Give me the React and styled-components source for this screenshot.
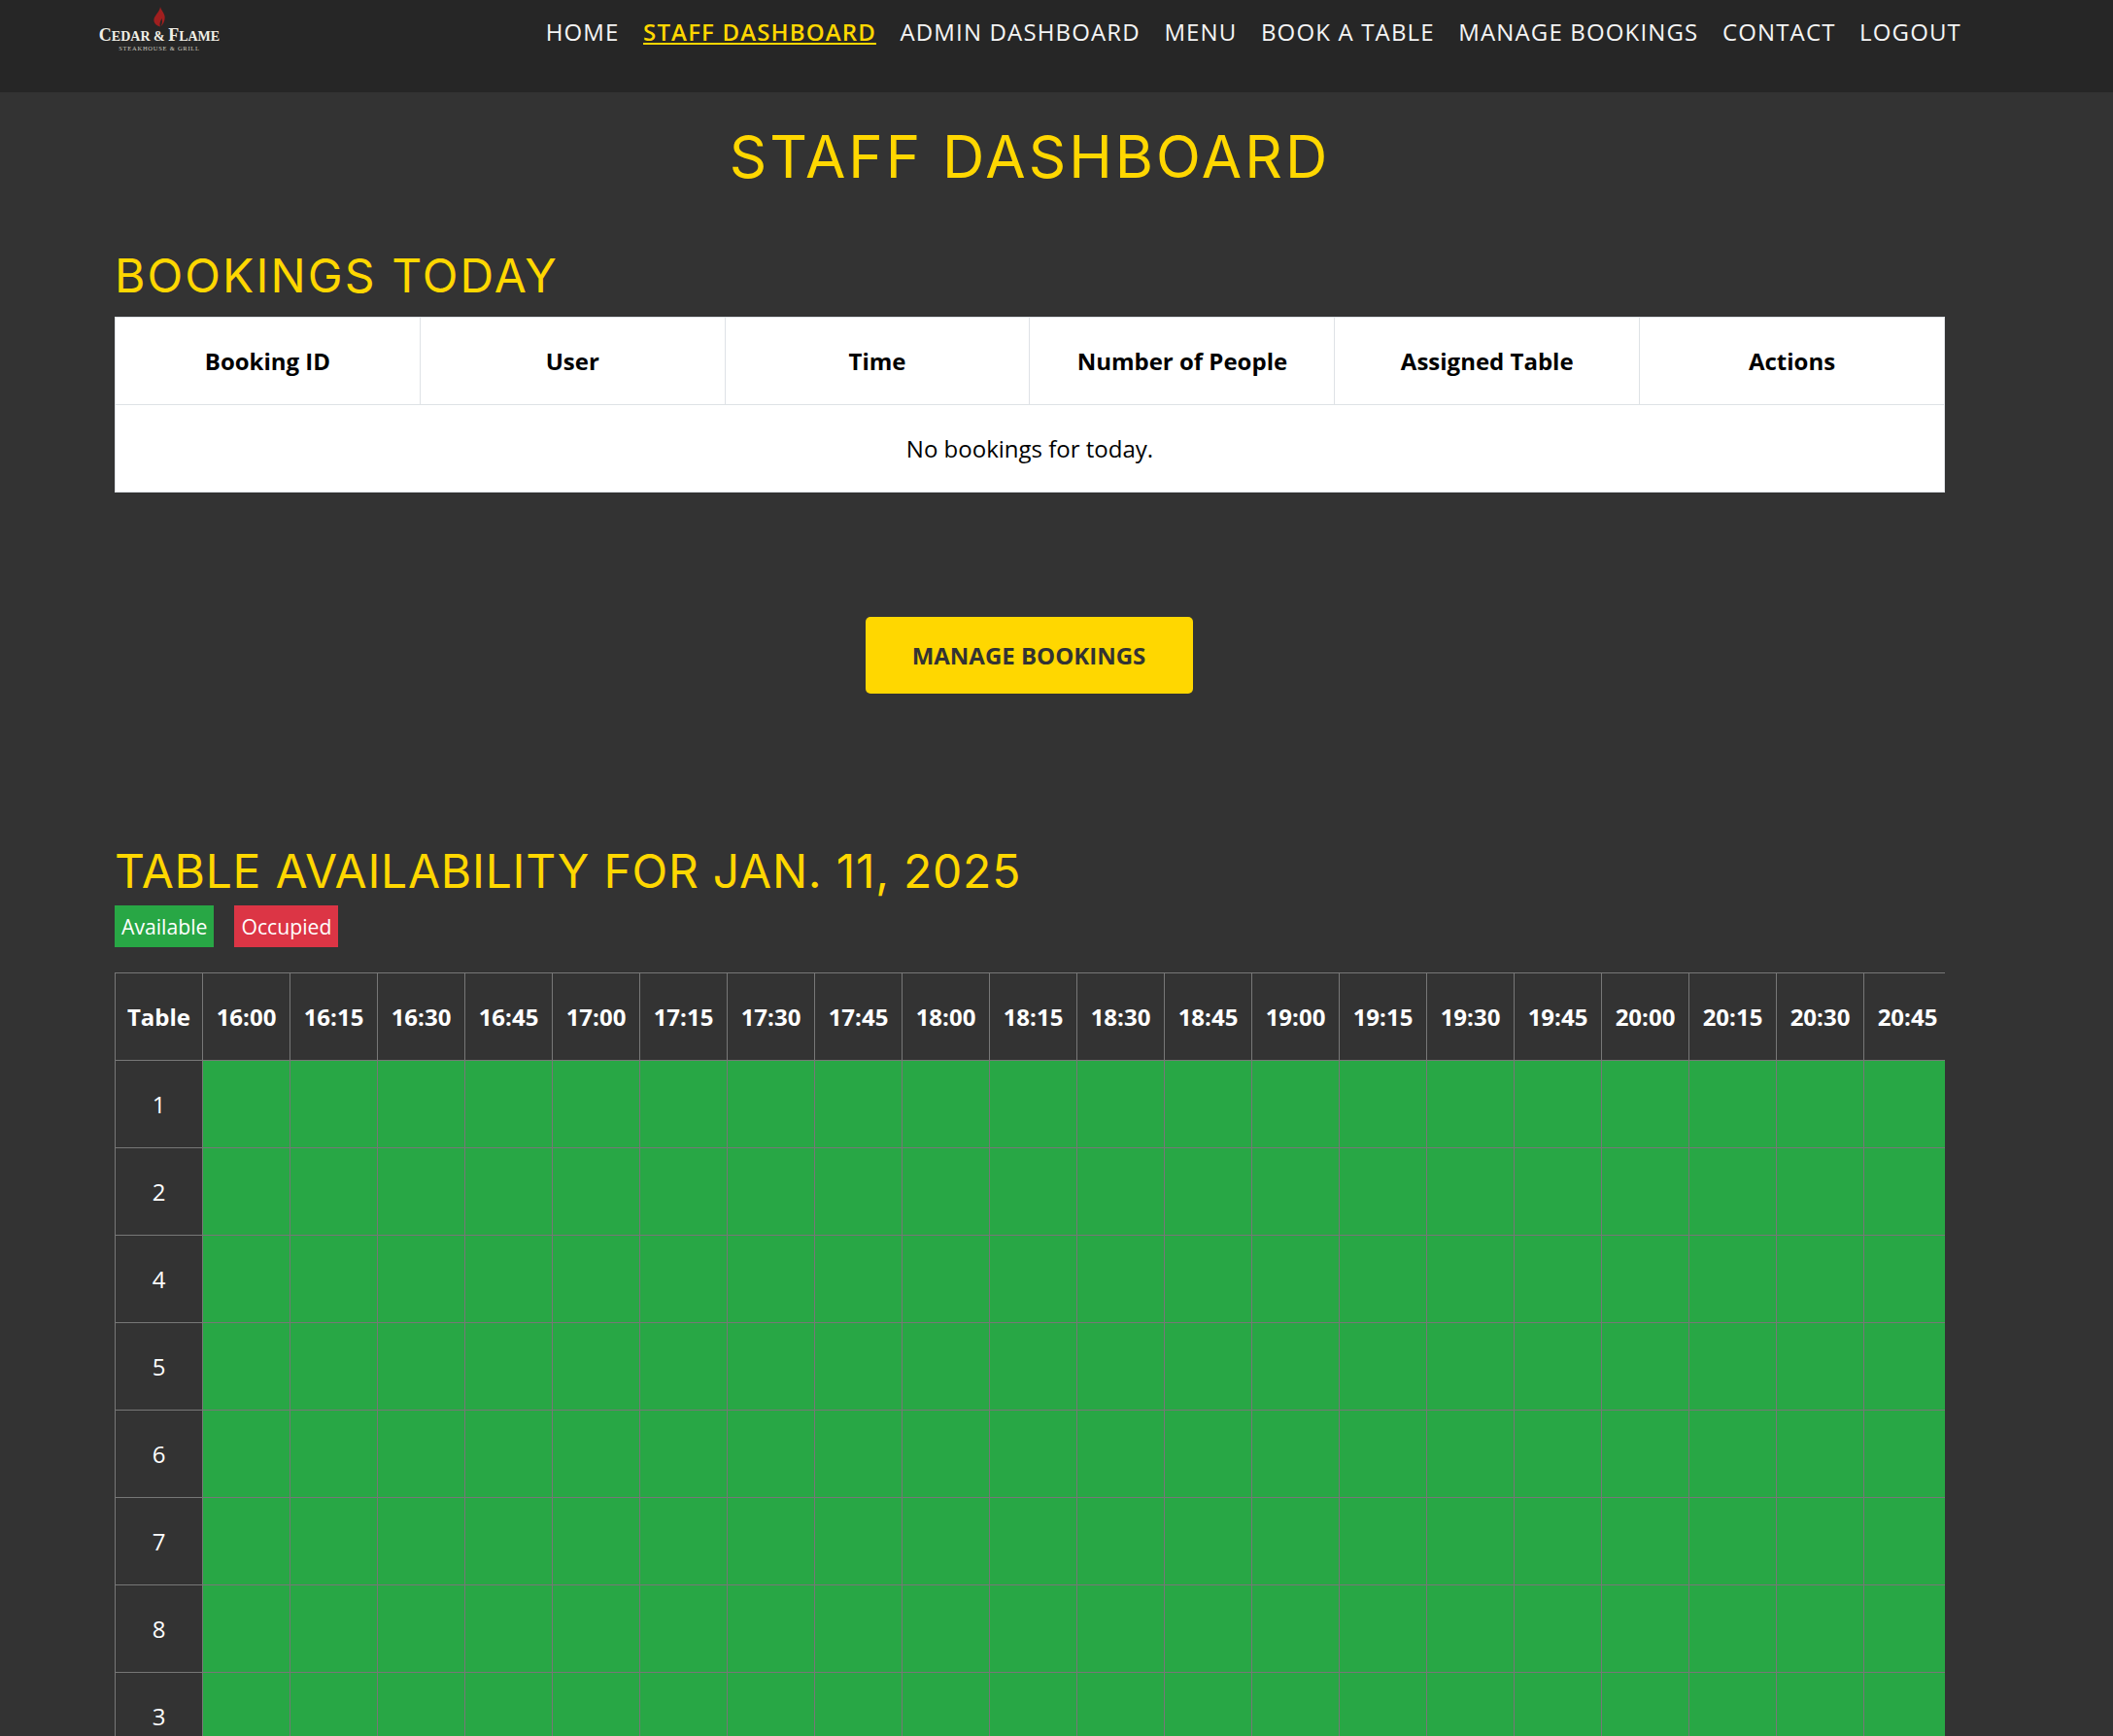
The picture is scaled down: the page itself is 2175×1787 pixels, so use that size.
import React from 'react'
import styled, { createGlobalStyle } from 'styled-components'

const GlobalStyle = createGlobalStyle`
  html, body { margin: 0; padding: 0; background: #333333; }
  body { font-family: "Open Sans", "Liberation Sans", sans-serif; color: #fff; }
`

const Page = styled.div`
  height: 1787px;
  overflow: hidden;
  background: #333333;
`

const Header = styled.header`
  height: 95px;
  background: #262626;
  display: flex;
  justify-content: space-between;
  align-items: flex-start;
  padding: 0 156px 0 102px;
`

const Logo = styled.div`
  width: 124px;
  padding-top: 7px;
  display: flex;
  flex-direction: column;
  align-items: center;
  font-family: "Liberation Serif", serif;
  color: #f1efe6;
`

const LogoName = styled.div`
  font-size: 14px;
  line-height: 16px;
  font-weight: 700;
  white-space: nowrap;
`

const LogoCap = styled.span`
  font-size: 18px;
`

const LogoSub = styled.div`
  font-size: 6.5px;
  line-height: 8px;
  letter-spacing: 0.75px;
  color: #c9c7bf;
  white-space: nowrap;
`

const Nav = styled.nav`
  display: flex;
  gap: 24.5px;
  padding-top: 17px;
`

const NavLink = styled.a`
  font-size: 24px;
  line-height: 32px;
  letter-spacing: 1.15px;
  color: ${p => (p.$active ? '#ffd700' : '#f5f5f5')};
  font-weight: ${p => (p.$active ? 600 : 400)};
  text-decoration: ${p => (p.$active ? 'underline' : 'none')};
  white-space: nowrap;
`

const Main = styled.main`
  width: 1884px;
  margin-left: 118px;
`

const Title = styled.h1`
  margin: 33px 0 0;
  font-family: Inter, "Open Sans", sans-serif;
  font-size: 60px;
  line-height: 66px;
  letter-spacing: 3px;
  font-weight: 400;
  color: #ffd700;
  text-align: center;
`

const SectionTitle = styled.h2`
  margin: ${p => p.$top} 0 0;
  font-family: Inter, "Open Sans", sans-serif;
  font-size: 48px;
  line-height: 56px;
  letter-spacing: ${p => p.$tracking};
  font-weight: 400;
  color: #ffd700;
  white-space: nowrap;
`

const BookingTable = styled.table`
  width: 100%;
  margin-top: 14px;
  border-collapse: collapse;
  table-layout: fixed;
  background: #fff;
  color: #000;
  font-size: 24px;

  th, td {
    height: 90px;
    padding: 0;
    border: 1px solid #dee2e6;
    text-align: center;
    box-sizing: border-box;
  }
`

const ButtonRow = styled.div`
  display: flex;
  justify-content: center;
  margin-top: 128px;
  padding-right: 2px;
`

const ManageButton = styled.button`
  width: 337px;
  height: 79px;
  border: 0;
  border-radius: 5px;
  background: #ffd700;
  color: #333333;
  font-family: inherit;
  font-size: 24px;
  font-weight: 700;
`

const Legend = styled.div`
  display: flex;
  gap: 21px;
  margin-top: 7px;
`

const LegendTag = styled.span`
  height: 43px;
  padding: 0 7px;
  display: flex;
  align-items: center;
  font-size: 21.2px;
  background: ${p => (p.$occupied ? '#dc3545' : '#28a745')};
  color: #fff;
`

const GridWrap = styled.div`
  margin-top: 26px;
  overflow: hidden;
`

const Grid = styled.table`
  width: 1890px;
  border-collapse: collapse;
  table-layout: fixed;
  font-size: 24px;

  th, td {
    width: 90px;
    height: 90px;
    padding: 0;
    border: 1px solid #777777;
    text-align: center;
    box-sizing: border-box;
    color: #fff;
  }
`

const SlotCell = styled.td`
  background: #28a745;
`

const slots = [
  '16:00', '16:15', '16:30', '16:45', '17:00', '17:15', '17:30',
  '17:45', '18:00', '18:15', '18:30', '18:45', '19:00', '19:15',
  '19:30', '19:45', '20:00', '20:15', '20:30', '20:45',
]
const tables = [1, 2, 4, 5, 6, 7, 8, 3]
const links = ['HOME', 'STAFF DASHBOARD', 'ADMIN DASHBOARD', 'MENU', 'BOOK A TABLE', 'MANAGE BOOKINGS', 'CONTACT', 'LOGOUT']
const bookingCols = ['Booking ID', 'User', 'Time', 'Number of People', 'Assigned Table', 'Actions']

export default function App() {
  return (
    <Page>
      <GlobalStyle />
      <Header>
        <Logo>
          <svg width="12" height="21" viewBox="0 0 12 21">
            <path d="M7 0c.6 3 3.400 5.500 4.400 9 1 3.800-.8 8.500-4 11.500 1.600-3 2-5.500 1-8.500-.6 1.800-1.600 3-1.800 5-.2 1.500 0 2.600.4 3.500C3 19.500.2 17 .4 13.200.6 9 6.400 5.500 7 0z" fill="#a01f1f" />
          </svg>
          <LogoName><LogoCap>C</LogoCap>EDAR &amp; <LogoCap>F</LogoCap>LAME</LogoName>
          <LogoSub>STEAKHOUSE &amp; GRILL</LogoSub>
        </Logo>
        <Nav>
          {links.map(l => <NavLink key={l} href="#" $active={l === 'STAFF DASHBOARD'}>{l}</NavLink>)}
        </Nav>
      </Header>
      <Main>
        <Title>STAFF DASHBOARD</Title>
        <SectionTitle $top="62px" $tracking="2.1px">BOOKINGS TODAY</SectionTitle>
        <BookingTable>
          <thead>
            <tr>{bookingCols.map(c => <th key={c}>{c}</th>)}</tr>
          </thead>
          <tbody>
            <tr><td colSpan={6}>No bookings for today.</td></tr>
          </tbody>
        </BookingTable>
        <ButtonRow><ManageButton>MANAGE BOOKINGS</ManageButton></ButtonRow>
        <SectionTitle $top="155px" $tracking="0.75px">TABLE AVAILABILITY FOR JAN. 11, 2025</SectionTitle>
        <Legend>
          <LegendTag>Available</LegendTag>
          <LegendTag $occupied>Occupied</LegendTag>
        </Legend>
        <GridWrap>
          <Grid>
            <thead>
              <tr>
                <th>Table</th>
                {slots.map(s => <th key={s}>{s}</th>)}
              </tr>
            </thead>
            <tbody>
              {tables.map(t => (
                <tr key={t}>
                  <td>{t}</td>
                  {slots.map(s => <SlotCell key={s} />)}
                </tr>
              ))}
            </tbody>
          </Grid>
        </GridWrap>
      </Main>
    </Page>
  )
}
